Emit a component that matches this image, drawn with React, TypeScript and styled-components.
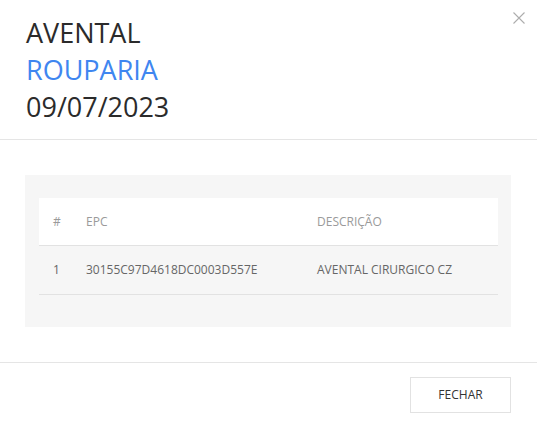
import React from "react";
import styled, { createGlobalStyle } from "styled-components";

const Global = createGlobalStyle`
  html, body { margin: 0; padding: 0; background: #fff; }
  body { font-family: "Open Sans", "Liberation Sans", sans-serif; }
  * { box-sizing: border-box; }
`;

const Modal = styled.div`
  width: 537px;
  height: 426px;
  background: #fff;
  display: flex;
  flex-direction: column;
`;

const Header = styled.header`
  position: relative;
  padding: 14px 26px 14px;
  border-bottom: 1px solid #e5e5e5;
`;

const TitleLine = styled.div<{ $accent?: boolean }>`
  font-size: 27px;
  line-height: 37px;
  color: ${(p) => (p.$accent ? "#3f86f0" : "#2b2b2b")};
`;

const Close = styled.button`
  position: absolute;
  top: 11px;
  right: 11px;
  width: 14px;
  height: 14px;
  padding: 0;
  border: none;
  background: none;
  cursor: pointer;
  display: flex;
`;

const Body = styled.section`
  padding: 35px 26px 35px 25px;
  border-bottom: 1px solid #e5e5e5;
`;

const Panel = styled.div`
  background: #f6f6f6;
  padding: 23px 13px 32px 14px;
`;

const Table = styled.table`
  width: 100%;
  border-collapse: collapse;
  font-size: 12px;
`;

const HeadCell = styled.th<{ $w?: number }>`
  background: #fff;
  text-align: left;
  font-weight: 400;
  color: #9a9a9a;
  height: 47px;
  padding: 0 0 0 14px;
  border-bottom: 1px solid #e2e2e2;
  width: ${(p) => (p.$w ? `${p.$w}px` : "auto")};
`;

const Cell = styled.td`
  color: #666;
  height: 49px;
  padding: 0 0 0 14px;
  border-bottom: 1px solid #e2e2e2;
`;

const Footer = styled.footer`
  display: flex;
  justify-content: flex-end;
  padding: 14px 26px 13px;
`;

const Button = styled.button`
  width: 101px;
  height: 36px;
  background: #fff;
  border: 1px solid #e2e2e2;
  font-family: "Open Sans", "Liberation Sans", sans-serif;
  font-size: 12px;
  color: #333;
  cursor: pointer;
`;

export default function App() {
  return (
    <>
      <Global />
      <Modal>
        <Header>
          <TitleLine>AVENTAL</TitleLine>
          <TitleLine $accent>ROUPARIA</TitleLine>
          <TitleLine>09/07/2023</TitleLine>
          <Close aria-label="Fechar">
            <svg width="14" height="14" viewBox="0 0 14 14">
              <path d="M1.5 1.5 L12.5 12.5 M12.5 1.5 L1.5 12.5" stroke="#adadad" strokeWidth="1.1" fill="none" />
            </svg>
          </Close>
        </Header>
        <Body>
          <Panel>
            <Table>
              <thead>
                <tr>
                  <HeadCell $w={33}>#</HeadCell>
                  <HeadCell $w={231}>EPC</HeadCell>
                  <HeadCell>DESCRIÇÃO</HeadCell>
                </tr>
              </thead>
              <tbody>
                <tr>
                  <Cell>1</Cell>
                  <Cell>30155C97D4618DC0003D557E</Cell>
                  <Cell>AVENTAL CIRURGICO CZ</Cell>
                </tr>
              </tbody>
            </Table>
          </Panel>
        </Body>
        <Footer>
          <Button>FECHAR</Button>
        </Footer>
      </Modal>
    </>
  );
}
